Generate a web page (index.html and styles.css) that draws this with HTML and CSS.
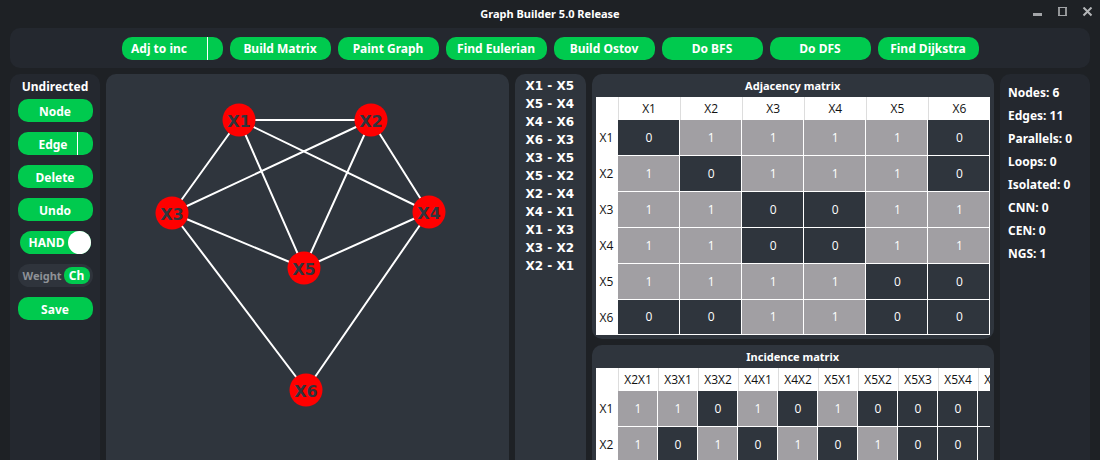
FILE: index.html
```
<!DOCTYPE html>
<html lang="en">
<head>
<meta charset="utf-8">
<title>Graph Builder 5.0 Release</title>
<link rel="stylesheet" href="styles.css">
</head>
<body>
<div class="app">
  <header class="titlebar">
    <h1 class="title">Graph Builder 5.0 Release</h1>
    <div class="window-controls">
      <button class="win" aria-label="Minimize"><svg width="11" height="11"><path d="M1 7.500h9" stroke="#a3a5a8" stroke-width="3"/></svg></button>
      <button class="win" aria-label="Maximize"><svg width="11" height="11"><path d="M2 0v9M9 0v9" stroke="#929496" stroke-width="2"/><path d="M1 .5h9M1 8.500h9" stroke="#a3a5a8"/></svg></button>
      <button class="win" aria-label="Close"><svg width="11" height="11"><path d="M1.500 .5l8 8M9.500 .5l-8 8" stroke="#b4b6b8" stroke-width="2"/></svg></button>
    </div>
  </header>

  <nav class="toolbar">
    <div class="split wide"><button class="split-main adj">Adj to inc</button><button class="split-menu" aria-label="Conversion options"></button></div>
    <button class="btn wide">Build Matrix</button>
    <button class="btn wide">Paint Graph</button>
    <button class="btn wide">Find Eulerian</button>
    <button class="btn wide">Build Ostov</button>
    <button class="btn wide">Do BFS</button>
    <button class="btn wide">Do DFS</button>
    <button class="btn wide">Find Dijkstra</button>
  </nav>

  <main class="workspace">
    <aside class="panel tools">
      <p class="mode">Undirected</p>
      <button class="btn">Node</button>
      <div class="split"><button class="split-main edge">Edge</button><button class="split-menu" aria-label="Edge options"></button></div>
      <button class="btn">Delete</button>
      <button class="btn">Undo</button>
      <label class="toggle">HAND<input class="knob" type="checkbox" checked></label>
      <div class="weight"><span class="weight-label">Weight</span><button class="weight-btn">Ch</button></div>
      <button class="btn">Save</button>
    </aside>

    <section class="canvas" aria-label="Graph">
      <svg class="graph" width="400" height="380">
        <g class="edges">
          <path d="M133 46H265M133 46L66 139M133 46L198 194M133 46L323 138M265 46L66 139M265 46L198 194M265 46L323 138M66 139L198 194M323 138L198 194M66 139L200 316M323 138L200 316"/>
        </g>
        <g class="nodes">
          <circle cx="133" cy="46" r="16.500"/><circle cx="265" cy="46" r="16.500"/>
          <circle cx="66" cy="139" r="16.500"/><circle cx="323" cy="138" r="16.500"/>
          <circle cx="198" cy="194" r="16.500"/><circle cx="200" cy="316" r="16.500"/>
        </g>
        <g class="names">
          <text x="133" y="53">X1</text><text x="265" y="53">X2</text>
          <text x="66" y="146">X3</text><text x="323" y="145">X4</text>
          <text x="198" y="201">X5</text><text x="200" y="323">X6</text>
        </g>
      </svg>
    </section>

    <ul class="edge-list">
      <li>X1 - X5</li><li>X5 - X4</li><li>X4 - X6</li><li>X6 - X3</li><li>X3 - X5</li><li>X5 - X2</li><li>X2 - X4</li><li>X4 - X1</li><li>X1 - X3</li><li>X3 - X2</li><li>X2 - X1</li>
    </ul>

    <div class="matrices">
      <section class="matrix">
        <h2 class="matrix-title">Adjacency matrix</h2>
        <table class="grid adjacency">
          <thead><tr><th class="corner"></th><th>X1</th><th>X2</th><th>X3</th><th>X4</th><th>X5</th><th>X6</th></tr></thead>
          <tbody>
            <tr><th>X1</th><td>0</td><td class="on">1</td><td class="on">1</td><td class="on">1</td><td class="on">1</td><td>0</td></tr>
            <tr><th>X2</th><td class="on">1</td><td>0</td><td class="on">1</td><td class="on">1</td><td class="on">1</td><td>0</td></tr>
            <tr><th>X3</th><td class="on">1</td><td class="on">1</td><td>0</td><td>0</td><td class="on">1</td><td class="on">1</td></tr>
            <tr><th>X4</th><td class="on">1</td><td class="on">1</td><td>0</td><td>0</td><td class="on">1</td><td class="on">1</td></tr>
            <tr><th>X5</th><td class="on">1</td><td class="on">1</td><td class="on">1</td><td class="on">1</td><td>0</td><td>0</td></tr>
            <tr><th>X6</th><td>0</td><td>0</td><td class="on">1</td><td class="on">1</td><td>0</td><td>0</td></tr>
          </tbody>
        </table>
      </section>
      <section class="matrix incidence-panel">
        <h2 class="matrix-title">Incidence matrix</h2>
        <div class="scroller">
          <table class="grid incidence">
            <thead><tr><th class="corner"></th><th>X2X1</th><th>X3X1</th><th>X3X2</th><th>X4X1</th><th>X4X2</th><th>X5X1</th><th>X5X2</th><th>X5X3</th><th>X5X4</th><th>X6X3</th></tr></thead>
            <tbody>
              <tr><th>X1</th><td class="on">1</td><td class="on">1</td><td>0</td><td class="on">1</td><td>0</td><td class="on">1</td><td>0</td><td>0</td><td>0</td><td></td></tr>
              <tr><th>X2</th><td class="on">1</td><td>0</td><td class="on">1</td><td>0</td><td class="on">1</td><td>0</td><td class="on">1</td><td>0</td><td>0</td><td></td></tr>
            </tbody>
          </table>
        </div>
      </section>
    </div>

    <aside class="panel stats">
      <p>Nodes: 6</p><p>Edges: 11</p><p>Parallels: 0</p><p>Loops: 0</p><p>Isolated: 0</p><p>CNN: 0</p><p>CEN: 0</p><p>NGS: 1</p>
    </aside>
  </main>
</div>
</body>
</html>
```
FILE: styles.css
```
* { box-sizing: border-box; }
body {
  margin: 0;
  background: #1e2125;
  color: #fff;
  font: bold 12px/16px Tahoma, "Noto Sans", sans-serif;
}
p, h1, h2, ul { margin: 0; padding: 0; font-size: inherit; }
button { border: 0; padding: 2px 0 0; font: inherit; color: inherit; }

.app {
  display: flex;
  flex-direction: column;
  height: 100vh;
  padding: 0 10px;
  overflow: hidden;
}

.titlebar {
  display: grid;
  grid-template-columns: 1fr auto 1fr;
  flex: none;
  height: 28px;
}
.title { grid-column: 2; font-size: 11px; line-height: 28px; }
.window-controls {
  display: flex;
  justify-content: flex-end;
  align-items: flex-start;
  gap: 14px;
  margin-right: -3px;
  padding-top: 7px;
}
.win { display: flex; padding: 0; background: none; }

.toolbar {
  display: flex;
  flex: none;
  justify-content: center;
  align-items: center;
  gap: 7px;
  height: 40px;
  margin-bottom: 6px;
  border-radius: 10px;
  background: #24282f;
}
.btn, .split {
  width: 75px;
  height: 23px;
  border-radius: 10px;
  background: #00ca4e;
}
.btn.wide, .split.wide { width: 101px; }
.split { display: flex; overflow: hidden; }
.split-main { flex: 1; background: none; }
.split-main.adj { padding-right: 10px; }
.split-main.edge { padding-left: 12px; }
.split-menu { width: 16px; border-left: 1px solid #fff; background: none; }

.workspace {
  display: grid;
  grid-template-columns: 90px minmax(0, 1fr) 71px minmax(0, 1fr) 90px;
  grid-template-rows: minmax(0, 1fr);
  gap: 6px;
  flex: 1;
  min-height: 0;
}
.panel { border-radius: 10px 10px 0 0; background: #24282f; }
.tools {
  display: flex;
  flex-direction: column;
  align-items: center;
  gap: 10px;
  padding-top: 5px;
}
.mode { margin-bottom: -6px; }
.toggle {
  display: flex;
  justify-content: space-between;
  align-items: center;
  width: 71px;
  height: 23px;
  padding-left: 9px;
  border-radius: 12px;
  background: #00ca4e;
}
.knob {
  appearance: none;
  width: 23px;
  height: 23px;
  margin: 0;
  border-radius: 50%;
  background: #fff;
}
.weight {
  display: flex;
  justify-content: space-between;
  align-items: center;
  width: 75px;
  height: 23px;
  padding: 0 3px 0 5px;
  border-radius: 12px;
  background: #2f343c;
}
.weight-label { color: #8e9196; font-size: 11px; }
.weight-btn {
  width: 26px;
  height: 17px;
  padding: 0;
  border-radius: 8px;
  background: #00ca4e;
}

.canvas {
  overflow: hidden;
  border-radius: 10px 10px 0 0;
  background: #2f353d;
}
.graph { display: block; }
.edges { fill: none; stroke: #fff; stroke-width: 2; }
.nodes { fill: #f00; }
.names {
  fill: #2f353d;
  font: bold 16px Verdana, "DejaVu Sans", sans-serif;
  text-anchor: middle;
}

.edge-list {
  padding: 3px 0 0 11px;
  border-radius: 10px 10px 0 0;
  background: #2f353d;
  font: bold 12px/18px Verdana, "DejaVu Sans", sans-serif;
  list-style: none;
}

.matrices { display: flex; flex-direction: column; gap: 6px; }
.matrix {
  flex: none;
  padding: 0 4px 4px;
  border-radius: 10px;
  background: #2f353d;
}
.incidence-panel { flex: 1 0 auto; border-radius: 10px 10px 0 0; }
.matrix-title { font-size: 11px; line-height: 23px; text-align: center; }
.scroller { overflow: hidden; }
.grid {
  border-spacing: 0;
  table-layout: fixed;
  font: 12px/16px "Segoe UI", "Open Sans", sans-serif;
  text-align: center;
}
.adjacency { width: 100%; }
.incidence { width: 422px; }
.grid th, .grid td { padding: 0; }
.grid th { background: #fff; color: #111; font-weight: normal; }
.grid .corner { width: 22px; border: 0; }
.grid thead th { height: 23px; border-left: 1px solid #ddd; }
.grid tbody th { height: 36px; }
.adjacency tbody tr:last-child th { height: 35px; }
.grid tbody td {
  padding-left: 2px;
  border-right: 1px solid #fff;
  border-bottom: 1px solid #fff;
}
.grid .on { background: #a19fa3; }

.stats { padding: 7px 0 0 8px; line-height: 23px; }
```
